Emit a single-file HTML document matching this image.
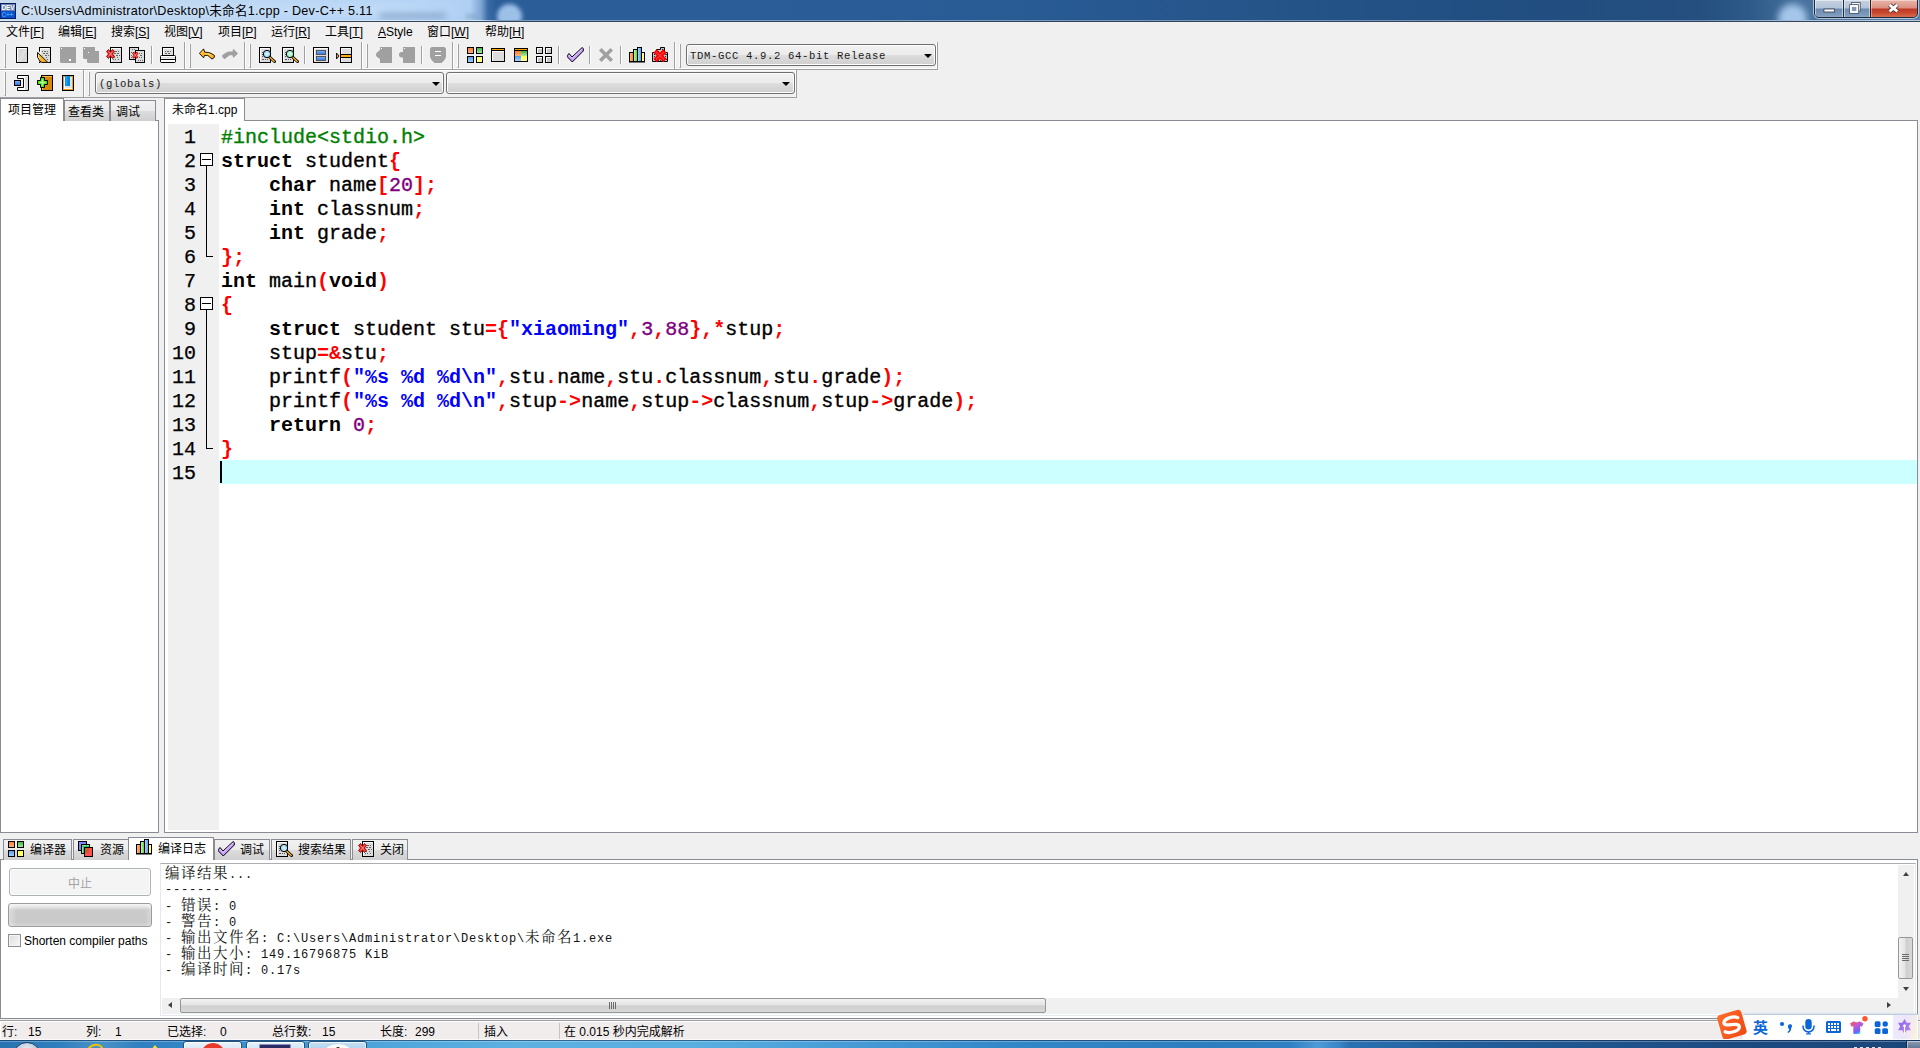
<!DOCTYPE html>
<html lang="zh-CN">
<head>
<meta charset="utf-8">
<title>Dev-C++ 5.11</title>
<style>
*{box-sizing:border-box;margin:0;padding:0}
html,body{width:1920px;height:1048px;overflow:hidden}
body{position:relative;background:#f0f0f0;font-family:"Liberation Sans","Noto Sans CJK SC",sans-serif;font-size:12px;color:#000;line-height:1}
.abs{position:absolute}
/* ---------- title bar ---------- */
#title{position:absolute;left:0;top:0;width:1920px;height:22px;overflow:hidden;background:linear-gradient(90deg,#c4d9ef 0px,#bdd6f1 150px,#b5d4f5 300px,#b3d3f6 420px,#b0d0f3 470px,#7ea6d4 481px,#3b6ba4 488px,#2b5e99 496px,#2b5e99 700px,#295b95 1000px,#245387 1300px,#214d80 1560px,#244f7f 1700px,#2d5a88 1750px,#48729e 1800px,#5a80a8 1920px)}
#title .ttl{position:absolute;left:21px;top:4px;font-size:12.6px;white-space:nowrap;letter-spacing:.27px;color:#000;line-height:15px}
#title .ln1{position:absolute;left:0;top:20px;width:1920px;height:1px;background:linear-gradient(90deg,#dbe8f6 0,#d0e2f5 480px,#7c9cc0 500px,#6d8fb5 1700px,#a9c2dc 1800px,#b8cde4 1920px)}
#title .ln2{position:absolute;left:0;top:21px;width:1920px;height:1px;background:#35455c}
/* ---------- menu ---------- */
#menu{position:absolute;left:0;top:22px;width:1920px;height:20px;background:#f0f0f0}
#menu span{position:absolute;top:3px;font-size:12px;line-height:14px;white-space:nowrap}
#menu u{text-decoration:underline;text-underline-offset:1px}
/* ---------- toolbars ---------- */
.tb{position:absolute;background:#f0f0f0}
.grip{position:absolute;width:2px;border-left:1px solid #fafafa;border-right:1px solid #a0a0a0;border-bottom:1px solid #a0a0a0}
.vsep{position:absolute;width:2px;border-left:1px solid #a0a0a0;border-right:1px solid #fff}
.bandend{position:absolute;width:2px;border-left:1px solid #a0a0a0;border-right:1px solid #fff}
.ico{position:absolute;width:16px;height:16px}
.combo{position:absolute;border:1px solid #707070;border-radius:3px;background:linear-gradient(#f2f2f2 0%,#ebebeb 48%,#dddddd 52%,#cfcfcf 100%);box-shadow:inset 0 0 0 1px #fcfcfc;font-family:"Liberation Mono",monospace;font-size:10px;white-space:nowrap}
.combo i{position:absolute;right:5px;top:8px;width:0;height:0;border-left:4px solid transparent;border-right:4px solid transparent;border-top:4px solid #000}
</style>
</head>
<body>
<!-- TITLE BAR -->
<div id="title">
 <div class="abs" style="left:0;top:0;width:470px;height:22px;background:linear-gradient(180deg,rgba(255,255,255,.05) 0,rgba(255,255,255,.18) 9px,rgba(255,255,255,.10) 16px,rgba(255,255,255,0) 21px);-webkit-mask-image:linear-gradient(90deg,#000 0,#000 380px,transparent 470px)"></div>
 <div class="abs" style="left:380px;top:13px;width:66px;height:6px;background:#7f9cc0;filter:blur(3px);opacity:.7"></div>
 <div class="abs" style="left:466px;top:14px;width:12px;height:5px;background:#7f9cc0;filter:blur(2px);opacity:.6"></div>
 <div class="abs" style="left:497px;top:4px;width:25px;height:25px;border-radius:50%;background:#9dc0e8;filter:blur(2px)"></div>
 <div class="abs" style="left:1778px;top:4px;width:29px;height:29px;border-radius:50%;background:#a4c6ea;filter:blur(3.500px)"></div>
 <!-- app icon -->
 <div class="abs" style="left:0;top:3px;width:16px;height:16px;background:#0d1c5c;overflow:hidden">
  <div class="abs" style="left:1px;top:1px;width:14px;height:7px;background:#6d83b3"></div>
  <div class="abs" style="left:1px;top:8px;width:14px;height:7px;background:#0a50c8"></div>
  <div class="abs" style="left:1.5px;top:1px;font:bold 6.5px/7px 'Liberation Sans',sans-serif;color:#fff;letter-spacing:-.2px">DEV</div>
  <div class="abs" style="left:1.5px;top:8px;font:bold 6.5px/7px 'Liberation Sans',sans-serif;color:#3f9cff;letter-spacing:-.2px">C++</div>
 </div>
 <div class="ttl">C:\Users\Administrator\Desktop\未命名1.cpp - Dev-C++ 5.11</div>
 <div class="ln1"></div><div class="ln2"></div>
 <!-- window controls -->
 <div class="abs" style="left:1814px;top:-1px;width:104px;height:19px;border:1px solid #1b2a3f;border-radius:0 0 5px 5px;overflow:hidden;box-shadow:0 0 0 1px rgba(255,255,255,.55)">
  <div class="abs" style="left:0;top:0;width:28px;height:18px;background:linear-gradient(#c3d0e0 0,#b4c4d8 8px,#6c8bb0 9px,#7f9bbc 15px,#93abc8 18px);box-shadow:inset 0 0 0 1px rgba(255,255,255,.5)"></div>
  <div class="abs" style="left:28px;top:0;width:1px;height:18px;background:#1b2a3f"></div>
  <div class="abs" style="left:29px;top:0;width:26px;height:18px;background:linear-gradient(#c3d0e0 0,#b4c4d8 8px,#6c8bb0 9px,#7f9bbc 15px,#93abc8 18px);box-shadow:inset 0 0 0 1px rgba(255,255,255,.5)"></div>
  <div class="abs" style="left:55px;top:0;width:1px;height:18px;background:#3a1410"></div>
  <div class="abs" style="left:56px;top:0;width:47px;height:18px;background:linear-gradient(#eab5ab 0,#dc9082 8px,#bd3a26 9px,#c9492f 13px,#d9765a 18px);box-shadow:inset 0 0 0 1px rgba(255,255,255,.4)"></div>
  <svg class="abs" style="left:0;top:0" width="104" height="18" viewBox="0 0 104 18">
   <rect x="8.900" y="9" width="10.500" height="3" fill="#fff" stroke="#3b4658" stroke-width=".9"/>
   <rect x="37.600" y="3.800" width="6.400" height="6" fill="none" stroke="#3b4658" stroke-width="3.200"/><rect x="37.600" y="3.800" width="6.400" height="6" fill="none" stroke="#f4f6f8" stroke-width="1.700"/>
   <rect x="35.900" y="6" width="6.400" height="6" fill="none" stroke="#3b4658" stroke-width="3.300"/><rect x="35.900" y="6" width="6.400" height="6" fill="#7e98b8" stroke="#fff" stroke-width="1.900"/>
   <path d="M74.600 4.900L82.300 11.300M82.300 4.900L74.600 11.300" stroke="#4a2a28" stroke-width="4.400"/><path d="M74.600 4.900L82.300 11.300M82.300 4.900L74.600 11.300" stroke="#fff" stroke-width="2.800"/>
  </svg>
 </div>
</div>
<!-- MENU -->
<div id="menu">
 <span style="left:6px">文件[<u>F</u>]</span>
 <span style="left:58px">编辑[<u>E</u>]</span>
 <span style="left:111px">搜索[<u>S</u>]</span>
 <span style="left:164px">视图[<u>V</u>]</span>
 <span style="left:218px">项目[<u>P</u>]</span>
 <span style="left:271px">运行[<u>R</u>]</span>
 <span style="left:325px">工具[<u>T</u>]</span>
 <span style="left:378px"><u>A</u>Style</span>
 <span style="left:427px">窗口[<u>W</u>]</span>
 <span style="left:485px">帮助[<u>H</u>]</span>
</div>
<!--TOOLBARS-->
<svg width="0" height="0" style="position:absolute">
<defs>
<linearGradient id="gO" x1="0" y1="0" x2="0" y2="1"><stop offset="0" stop-color="#ff7a33"/><stop offset="1" stop-color="#ffb27a"/></linearGradient>
<linearGradient id="gG" x1="0" y1="0" x2="0" y2="1"><stop offset="0" stop-color="#3fae3f"/><stop offset="1" stop-color="#a8f0a0"/></linearGradient>
<linearGradient id="gB" x1="0" y1="0" x2="0" y2="1"><stop offset="0" stop-color="#4f9cf0"/><stop offset="1" stop-color="#a4d2ff"/></linearGradient>
<linearGradient id="gY" x1="0" y1="0" x2="0" y2="1"><stop offset="0" stop-color="#ffff40"/><stop offset="1" stop-color="#ffffa0"/></linearGradient>
<linearGradient id="gP" x1="0" y1="0" x2="1" y2="1"><stop offset="0" stop-color="#e8e8e8"/><stop offset="1" stop-color="#cfcfcf"/></linearGradient>
<radialGradient id="gMb"><stop offset="0" stop-color="#e4f6ff"/><stop offset="1" stop-color="#8fd0ee"/></radialGradient>
<radialGradient id="gMg"><stop offset="0" stop-color="#e0fff0"/><stop offset="1" stop-color="#86e8b8"/></radialGradient>
<linearGradient id="hO" x1="0" y1="0" x2="1" y2="0"><stop offset="0" stop-color="#ffc08a"/><stop offset="1" stop-color="#ff7a28"/></linearGradient><linearGradient id="hG" x1="0" y1="0" x2="1" y2="0"><stop offset="0" stop-color="#c8ffb0"/><stop offset="1" stop-color="#58c838"/></linearGradient><linearGradient id="hB" x1="0" y1="0" x2="1" y2="0"><stop offset="0" stop-color="#b8deff"/><stop offset="1" stop-color="#4a98f0"/></linearGradient><linearGradient id="hY" x1="0" y1="0" x2="1" y2="0"><stop offset="0" stop-color="#ffffc0"/><stop offset="1" stop-color="#ffff30"/></linearGradient><linearGradient id="gBar" x1="0" y1="0" x2="0" y2="1"><stop offset="0" stop-color="#7fb4ff"/><stop offset="1" stop-color="#2f6fe0"/></linearGradient>

<symbol id="i-new" viewBox="0 0 16 16"><rect x="2" y="0" width="12" height="16" fill="#000"/><rect x="3" y="1" width="10" height="14" fill="#d8d8d8"/><rect x="3" y="1" width="10" height="1" fill="#fff"/><rect x="3" y="1" width="1" height="14" fill="#fff"/><path d="M6 14L11 3" stroke="#e2e2e2" stroke-width="2"/></symbol>

<symbol id="i-page" viewBox="0 0 12 16"><rect x=".5" y=".5" width="11" height="15" fill="#dcdcdc" stroke="#000"/><path d="M1.5 14.5V1.5H10.5" stroke="#fff" fill="none"/><path d="M3 4.5h1m1 0h2m1 0h1M4 6.5h2m1 0h2M3 8.5h1m2 0h2m1 0h1M4 10.5h1m2 0h1M3 12.5h1m1 0h1m2 0h1" stroke="#666" fill="none"/></symbol>

<symbol id="i-open" viewBox="0 0 16 16"><use href="#i-page" x="2" y="0" width="12" height="16"/><path d="M0 4.500V11L2 14 4 16H11.500L2.500 4.500Z" fill="#f0f0f0"/><path d="M.6 5.500V10L2.200 13 4.500 15.400H10.800Z" fill="#ffb320" stroke="#000" stroke-linejoin="round"/><path d="M1.500 7.500V10L3 12.500" stroke="#ffe29a" fill="none"/></symbol>

<symbol id="i-save" viewBox="0 0 16 16"><path d="M0 0H16V16H1L0 15Z" fill="#a0a0a0"/><rect x="1" y="1" width="1" height="1" fill="#fff"/><rect x="9" y="12" width="2" height="2" fill="#fff"/></symbol>

<symbol id="i-saveall" viewBox="0 0 16 16"><path d="M0 0H12V4H16V16H5L4 15V12H1L0 11Z" fill="#a0a0a0"/><rect x="1" y="1" width="1" height="1" fill="#fff"/><rect x="5" y="5" width="1" height="1" fill="#fff"/></symbol>

<symbol id="i-redx" viewBox="0 0 9 11"><path d="M.5 2.500L2.500 .5 4.500 2.800 6.500 .5 8.500 2.500 6.500 5 8.500 7.500 6.500 9.500 4.500 7.200 2.500 9.500 .5 7.500 2.500 5Z" fill="#ff2020" stroke="#700" stroke-width=".8"/><path d="M2.500 2.500L6.500 7.500M6.500 2.500L2.500 7.500" stroke="#ff9090" stroke-width="1"/></symbol>

<symbol id="i-close" viewBox="0 0 16 16"><use href="#i-page" x="4" y="0" width="12" height="16"/><use href="#i-redx" x="0" y="2" width="9" height="11"/></symbol>

<symbol id="i-closeall" viewBox="0 0 16 16"><rect x=".5" y=".5" width="9" height="12" fill="#dcdcdc" stroke="#000"/><path d="M3 2.5h1m1 0h1M2 5.5h1M2 8.5h1M2 10.5h1" stroke="#666"/><rect x="6.5" y="3.5" width="9" height="12" fill="#dcdcdc" stroke="#000"/><path d="M10 6.5h1m1 0h1M11 8.5h2M10 10.5h1m1 0h1M9 13.5h1m1 0h1m1 0h1" stroke="#666"/><use href="#i-redx" x="3" y="4.5" width="6.5" height="8"/></symbol>

<symbol id="i-print" viewBox="0 0 16 16"><rect x="2.5" y=".5" width="11" height="8" fill="#dcdcdc" stroke="#000"/><path d="M3.5 8V1.5H12.5" stroke="#fff" fill="none"/><path d="M5 4.5h1m1 0h2m1 0h1M5 6.5h2m1 0h2" stroke="#666"/><rect x=".5" y="8.5" width="15" height="7" rx="1" fill="#fff" stroke="#000"/><rect x="1.5" y="10" width="13" height="1.5" fill="#d8d8d8"/><path d="M.5 12.5H15.5" stroke="#000"/></symbol>

<symbol id="i-undo" viewBox="0 0 16 16"><path d="M.4 6.400L4.600 1.900 5.800 5.200 9.750 5.500 12.500 6.600 15.600 8.500 15.200 10.600 13 12 10.700 10.100 8.800 8.400H5.500L4.600 10.800Z" fill="#ffb320" stroke="#000" stroke-width=".9" stroke-linejoin="round"/><path d="M2 6.400L4 4.200M6 6.800H9L12 8.200" stroke="#ffe08a" fill="none"/></symbol>

<symbol id="i-redo" viewBox="0 0 16 16"><path d="M16 6.400L11.400 1.800 10.400 4.500H6.400L3 6.300 0 8.500 .6 10.600 2.700 12.200 5 10.200 7.800 8.200H10.400L11.400 11Z" fill="#a0a0a0"/></symbol>

<symbol id="i-find" viewBox="0 0 17 16"><rect x=".5" y=".5" width="11" height="15" fill="#dcdcdc" stroke="#000"/><path d="M1.500 14.500V1.500H10.500" stroke="#fff" fill="none"/><path d="M3 5.500h1M3 7.500h1M3 9.500h1M3 12.500h2m1 0h1m1 0h1" stroke="#555"/><path d="M10.500 10L15.500 14.500" stroke="#000" stroke-width="3" stroke-linecap="round"/><path d="M11 10.500L15.300 14.400" stroke="#ffb320" stroke-width="1.400" stroke-linecap="round"/><circle cx="8" cy="7" r="3.700" fill="url(#gMb)" stroke="#000"/></symbol>

<symbol id="i-repl" viewBox="0 0 17 16"><rect x=".5" y=".5" width="11" height="15" fill="#dcdcdc" stroke="#000"/><path d="M1.500 14.500V1.500H10.500" stroke="#fff" fill="none"/><path d="M3 5.500h1M3 7.500h1M3 9.500h1M3 12.500h2m1 0h1m1 0h1" stroke="#555"/><path d="M10.500 10L15.500 14.500" stroke="#000" stroke-width="3" stroke-linecap="round"/><path d="M11 10.500L15.300 14.400" stroke="#ffb320" stroke-width="1.400" stroke-linecap="round"/><circle cx="8" cy="7" r="3.700" fill="url(#gMg)" stroke="#000"/></symbol>

<symbol id="i-list" viewBox="0 0 16 16"><rect x=".5" y=".5" width="15" height="15" fill="#dcdcdc" stroke="#000"/><path d="M1.500 14.500V1.500H14.500" stroke="#fff" fill="none"/><rect x="3.500" y="3.500" width="9" height="4" fill="url(#gBar)" stroke="#555"/><rect x="3.500" y="9.500" width="9" height="4" fill="url(#gBar)" stroke="#555"/></symbol>

<symbol id="i-goto" viewBox="0 0 16 16"><rect x="4.500" y=".5" width="11" height="15" fill="#dcdcdc" stroke="#000"/><path d="M5.500 14.500V1.500H14.500" stroke="#fff" fill="none"/><rect x="4.500" y="7.500" width="11" height="3" fill="#ffa810" stroke="#000"/><path d="M.5 6L3 9 .5 12Z" fill="#ffa810" stroke="#000" stroke-width=".9" stroke-linejoin="round"/></symbol>

<symbol id="i-tag1" viewBox="0 0 16 16"><path d="M4 0H16V16H4V12L1 10 0 8.500V7L1 5.500 4 3Z" fill="#a0a0a0"/><rect x="5" y="1" width="1" height="1" fill="#fff"/></symbol>
<symbol id="i-tag2" viewBox="0 0 16 16"><path d="M4 0H16V16H4V10.500H2L.5 9.500 0 8V7L.5 6 2 5H4Z" fill="#a0a0a0"/><rect x="5" y="1" width="1" height="1" fill="#fff"/></symbol>
<symbol id="i-shield" viewBox="0 0 16 16"><path d="M0 1.500L1.500 0H14.500L16 1.500V10L14.500 13 11.500 16H4.500L1.500 13 0 10Z" fill="#a0a0a0"/><rect x="5" y="4" width="6" height="1" fill="#fff"/><rect x="5" y="8" width="6" height="1" fill="#fff"/></symbol>

<symbol id="i-comp" viewBox="0 0 16 16"><rect x=".5" y=".5" width="6" height="6" fill="url(#gO)" stroke="#000"/><rect x="9.500" y=".5" width="6" height="6" fill="url(#gG)" stroke="#000"/><rect x=".5" y="9.500" width="6" height="6" fill="url(#gB)" stroke="#000"/><rect x="9.500" y="9.500" width="6" height="6" fill="url(#gY)" stroke="#000"/></symbol>

<symbol id="i-run" viewBox="0 0 16 16"><rect x="1.500" y="1.500" width="13" height="13" fill="#dcdcdc" stroke="#000"/><rect x="2" y="2" width="12" height="1" fill="#ffa500"/><rect x="2" y="3" width="12" height="1" fill="#000"/><path d="M2.500 14V4.500H14" stroke="#fff" fill="none"/></symbol>

<symbol id="i-crun" viewBox="0 0 16 16"><rect x="1.500" y="1.500" width="13" height="13" fill="#dcdcdc" stroke="#000"/><rect x="2" y="2" width="12" height="1" fill="#ffa500"/><rect x="2" y="3" width="12" height="1" fill="#000"/><rect x="2" y="4" width="6" height="5" fill="url(#gO)"/><rect x="8" y="4" width="6" height="5" fill="url(#gG)"/><rect x="2" y="9" width="6" height="5" fill="url(#gB)"/><rect x="8" y="9" width="6" height="5" fill="url(#gY)"/></symbol>

<symbol id="i-reb" viewBox="0 0 16 16"><g fill="#c8c8c8" stroke="#000"><rect x=".5" y=".5" width="6" height="6"/><rect x="9.500" y=".5" width="6" height="6"/><rect x=".5" y="9.500" width="6" height="6"/><rect x="9.500" y="9.500" width="6" height="6"/></g><path d="M1.500 6V1.500H6M10.500 6V1.500H15M1.500 15V10.500H6M10.500 15V10.500H15" stroke="#fff" fill="none"/></symbol>

<symbol id="i-check" viewBox="0 0 17 16"><path d="M.3 8.700L2 6.500 5 10 15.200 .5 16.300 1.500V4L5.300 15 .3 9.800Z" fill="#c79cff" stroke="#000" stroke-linejoin="round"/><path d="M2 8L5 11.500 15 2" stroke="#e6d0ff" fill="none"/></symbol>

<symbol id="i-x" viewBox="0 0 16 16"><path d="M1 3.500L3.500 1 8 5.500 12.500 1 15 3.500 10.500 8 15 12.500 12.500 15 8 10.500 3.500 15 1 12.500 5.500 8Z" fill="#a0a0a0"/></symbol>

<symbol id="i-chart" viewBox="0 0 16 16"><rect x=".5" y="5.500" width="4" height="9" fill="url(#hO)" stroke="#000"/><rect x="4.500" y="2.500" width="4" height="12" fill="url(#hG)" stroke="#000"/><rect x="8.500" y=".5" width="4" height="14" fill="url(#hB)" stroke="#000"/><rect x="12.500" y="5.500" width="3" height="9" fill="url(#hY)" stroke="#000"/><path d="M0 15H16" stroke="#000"/></symbol>

<symbol id="i-delp" viewBox="0 0 16 16"><path d="M.5 14.500V5.500H4.500V2.500H8.500V.5H12.500V5.500H15.500V14.500Z" fill="#c4c4c4" stroke="#000"/><path d="M2 7.500h1m1 0h1M2 9.500h1M2 12.500h1m1 0h1m7 0h1m1 0h1M13 7.500h2M13 9.500h1M6 13.500h1m1 0h1m1 0h1M6 4.500h1M10 2.500h1" stroke="#333"/><path d="M3 4L13 13.500M13 4L3 13.500" stroke="#f80000" stroke-width="4.600"/><path d="M4 5L12 12.500M12 5L4 12.500" stroke="#ff3a3a" stroke-width="1.200"/></symbol>

<symbol id="i-t2a" viewBox="0 0 16 16"><path d="M3.500 .5H14.500V15.500H3.500V12.500H9.500V3.500H3.500Z" fill="#fff" stroke="#000"/><path d="M11 1.500H14V15H11Z" fill="#dcdcdc"/><rect x=".5" y="5.500" width="6" height="5" fill="url(#gBar)" stroke="#000"/></symbol>

<symbol id="i-t2b" viewBox="0 0 16 16"><rect x="4.500" y=".5" width="11" height="15" fill="#d48806" stroke="#000"/><path d="M5.500 15V1.500H15" stroke="#ffb840" fill="none"/><path d="M3.500 2.500H7.500V5.500H10.500V9.500H7.500V12.500H3.500V9.500H.5V5.500H3.500Z" fill="#48e018" stroke="#000" stroke-linejoin="round"/><path d="M5.500 4.500V10.500M2.500 7.500H8.500" stroke="#b4ff98" stroke-width="1.400" fill="none"/></symbol>

<symbol id="i-t2c" viewBox="0 0 16 16"><rect x="2.500" y=".5" width="11" height="15" fill="#f0a010" stroke="#000"/><rect x="4" y="2" width="8" height="12" fill="#e2e2e2"/><path d="M4.500 13V2" stroke="#fff"/><path d="M4 13.500H12" stroke="#f6f6f6"/><rect x="5" y="1" width="5" height="10" fill="#0088dd"/><path d="M6.500 1V10.500" stroke="#20a8f8" stroke-width="1.500"/></symbol>

<symbol id="i-res" viewBox="0 0 16 16"><rect x=".5" y=".5" width="8" height="9" fill="#8484ff" stroke="#000"/><rect x="3.500" y="3.500" width="8" height="9" fill="#38c860" stroke="#000"/><path d="M4.500 4.500H8M9 4.500H10.500M4.500 6V12" stroke="#7cf0a0" fill="none"/><rect x="6.500" y="6.500" width="8" height="9" fill="#ff5050" stroke="#000"/><rect x="7" y="7" width="4" height="5" fill="#d05828"/><rect x="7" y="7" width="2" height="2" fill="#c07018"/></symbol>
</defs>
</svg>

<!-- toolbar 1 band -->
<div class="abs" style="left:0;top:42px;width:938px;height:28px;border-right:1px solid #a0a0a0;border-bottom:1px solid #a0a0a0"></div>
<div class="abs" style="left:0;top:68px;width:937px;height:1px;background:#fff"></div>
<div class="abs" style="left:936px;top:42px;width:1px;height:27px;background:#fff"></div>
<!-- toolbar 2 band -->
<div class="abs" style="left:0;top:70px;width:797px;height:28px;border-right:1px solid #a0a0a0;border-bottom:1px solid #a0a0a0"></div>
<div class="abs" style="left:0;top:70px;width:796px;height:1px;background:#fff"></div>
<div class="abs" style="left:795px;top:70px;width:1px;height:27px;background:#fff"></div>

<!-- grips and separators row1 -->
<div class="grip" style="left:4px;top:44px;height:24px"></div>
<div class="bandend" style="left:184px;top:42px;height:27px"></div><div class="grip" style="left:189px;top:44px;height:24px"></div>
<div class="bandend" style="left:244px;top:42px;height:27px"></div><div class="grip" style="left:249px;top:44px;height:24px"></div>
<div class="bandend" style="left:361px;top:42px;height:27px"></div><div class="grip" style="left:366px;top:44px;height:24px"></div>
<div class="bandend" style="left:452px;top:42px;height:27px"></div><div class="grip" style="left:457px;top:44px;height:24px"></div>
<div class="bandend" style="left:674px;top:42px;height:27px"></div><div class="grip" style="left:679px;top:44px;height:24px"></div>
<div class="vsep" style="left:151px;top:46px;height:18px"></div>
<div class="vsep" style="left:304px;top:46px;height:18px"></div>
<div class="vsep" style="left:421px;top:46px;height:18px"></div>
<div class="vsep" style="left:558px;top:46px;height:18px"></div>
<div class="vsep" style="left:589px;top:46px;height:18px"></div>
<div class="vsep" style="left:620px;top:46px;height:18px"></div>
<!-- row2 -->
<div class="grip" style="left:4px;top:72px;height:24px"></div>
<div class="bandend" style="left:83px;top:70px;height:27px"></div><div class="grip" style="left:88px;top:72px;height:24px"></div>

<!-- icons row1 (y=47) -->
<svg class="ico" style="left:14px;top:47px"><use href="#i-new"/></svg>
<svg class="ico" style="left:37px;top:47px"><use href="#i-open"/></svg>
<svg class="ico" style="left:60px;top:47px"><use href="#i-save"/></svg>
<svg class="ico" style="left:83px;top:47px"><use href="#i-saveall"/></svg>
<svg class="ico" style="left:106px;top:47px"><use href="#i-close"/></svg>
<svg class="ico" style="left:129px;top:47px"><use href="#i-closeall"/></svg>
<svg class="ico" style="left:160px;top:47px"><use href="#i-print"/></svg>
<svg class="ico" style="left:199px;top:47px"><use href="#i-undo"/></svg>
<svg class="ico" style="left:222px;top:47px"><use href="#i-redo"/></svg>
<svg class="ico" style="left:259px;top:47px;width:17px"><use href="#i-find"/></svg>
<svg class="ico" style="left:282px;top:47px;width:17px"><use href="#i-repl"/></svg>
<svg class="ico" style="left:313px;top:47px"><use href="#i-list"/></svg>
<svg class="ico" style="left:336px;top:47px"><use href="#i-goto"/></svg>
<svg class="ico" style="left:376px;top:47px"><use href="#i-tag1"/></svg>
<svg class="ico" style="left:399px;top:47px"><use href="#i-tag2"/></svg>
<svg class="ico" style="left:430px;top:47px"><use href="#i-shield"/></svg>
<svg class="ico" style="left:467px;top:47px"><use href="#i-comp"/></svg>
<svg class="ico" style="left:490px;top:47px"><use href="#i-run"/></svg>
<svg class="ico" style="left:513px;top:47px"><use href="#i-crun"/></svg>
<svg class="ico" style="left:536px;top:47px"><use href="#i-reb"/></svg>
<svg class="ico" style="left:567px;top:47px;width:17px"><use href="#i-check"/></svg>
<svg class="ico" style="left:598px;top:47px"><use href="#i-x"/></svg>
<svg class="ico" style="left:629px;top:47px"><use href="#i-chart"/></svg>
<svg class="ico" style="left:652px;top:47px"><use href="#i-delp"/></svg>
<!-- icons row2 (y=75) -->
<svg class="ico" style="left:14px;top:75px"><use href="#i-t2a"/></svg>
<svg class="ico" style="left:37px;top:75px"><use href="#i-t2b"/></svg>
<svg class="ico" style="left:60px;top:75px"><use href="#i-t2c"/></svg>

<!-- combos -->
<div class="combo" style="left:686px;top:44px;width:250px;height:22px"><span style="position:absolute;left:3px;top:5px;font-size:10.6px;letter-spacing:.64px;line-height:12px;color:#1a1a1a">TDM-GCC 4.9.2 64-bit Release</span><i style="top:9px;right:3px"></i></div>
<div class="combo" style="left:95px;top:72px;width:349px;height:22px"><span style="position:absolute;left:3px;top:5px;font-size:10.6px;letter-spacing:.64px;line-height:12px;color:#1a1a1a">(globals)</span><i style="top:9px;right:3px"></i></div>
<div class="combo" style="left:446px;top:72px;width:349px;height:22px"><i style="top:9px;right:4px"></i></div>
<!--/TOOLBARS-->
<!--LEFTPANEL-->
<style>
.tabi{position:absolute;border:1px solid #898c95;border-bottom:none;background:linear-gradient(#f2f2f2 0%,#ebebeb 50%,#dddddd 50%,#cfcfcf 100%);white-space:nowrap}
.taba{position:absolute;border:1px solid #898c95;border-bottom:none;background:#fff;white-space:nowrap}
.t12{position:absolute;font-size:12px;line-height:14px;white-space:nowrap}
#code{position:absolute;left:221px;top:126px;-webkit-text-stroke:.35px;font-family:"Liberation Mono",monospace;font-size:20px;line-height:24px;white-space:pre;color:#000}
#code div{height:24px}
#code b{font-weight:bold;-webkit-text-stroke:0}
#code .r{color:#ff0000;font-weight:bold;-webkit-text-stroke:0}
#code .g{color:#008000}
#code .p{color:#800080}
#code .s{color:#0000ff;font-weight:bold;-webkit-text-stroke:0}
#ln{position:absolute;left:168px;top:126px;-webkit-text-stroke:.25px;width:28px;font-family:"Liberation Mono",monospace;font-size:20px;line-height:24px;text-align:right;color:#000}
#ln div{height:24px}
.fold{position:absolute;left:200px;width:13px;height:13px;border:1px solid #000;background:#fff}
.fold:after{content:"";position:absolute;left:1px;top:5px;width:9px;height:1px;background:#000}
#log{position:absolute;left:165px;top:866px;font-family:"Liberation Mono","Noto Sans CJK SC",monospace;font-size:12px;letter-spacing:.8px;line-height:16px;white-space:pre;color:#111}
#log div{height:16px}
#log .c{font-family:"Liberation Mono","Noto Serif CJK SC",serif;font-size:14.5px;letter-spacing:1.5px}
#status span{position:absolute;top:4px;font-size:12px;line-height:14px;white-space:nowrap}
</style>
<!-- LEFT PANEL -->
<div class="abs" style="left:0;top:120px;width:159px;height:713px;border:1px solid #898c95;background:#fff"></div>
<div class="tabi" style="left:64px;top:100px;width:46px;height:21px"><span class="t12" style="left:3px;top:4px">查看类</span></div>
<div class="tabi" style="left:110px;top:100px;width:46px;height:21px"><span class="t12" style="left:5px;top:4px">调试</span></div>
<div class="taba" style="left:0;top:98px;width:64px;height:23px"><span class="t12" style="left:7px;top:4px">项目管理</span></div>
<!-- EDITOR PANEL -->
<div class="abs" style="left:164px;top:120px;width:1754px;height:713px;border:1px solid #898c95;background:#fff"></div>
<div class="taba" style="left:164px;top:98px;width:81px;height:23px"><span class="t12" style="left:7px;top:4px">未命名1.cpp</span></div>
<div class="abs" style="left:168px;top:124px;width:51px;height:706px;background:#f0f0f0"></div>
<div class="abs" style="left:219px;top:460px;width:1698px;height:24px;background:#ccffff"></div>
<div class="abs" style="left:220px;top:461px;width:2px;height:22px;background:#000"></div>
<div id="ln"><div>1</div><div>2</div><div>3</div><div>4</div><div>5</div><div>6</div><div>7</div><div>8</div><div>9</div><div>10</div><div>11</div><div>12</div><div>13</div><div>14</div><div>15</div></div>
<div class="fold" style="top:153px"></div>
<div class="abs" style="left:206px;top:166px;width:1px;height:91px;background:#000"></div>
<div class="abs" style="left:206px;top:256px;width:7px;height:1px;background:#000"></div>
<div class="fold" style="top:297px"></div>
<div class="abs" style="left:206px;top:310px;width:1px;height:139px;background:#000"></div>
<div class="abs" style="left:206px;top:448px;width:7px;height:1px;background:#000"></div>
<div id="code"><div><span class="g">#include&lt;stdio.h&gt;</span></div><div><b>struct</b> student<span class="r">{</span></div><div>    <b>char</b> name<span class="r">[</span><span class="p">20</span><span class="r">];</span></div><div>    <b>int</b> classnum<span class="r">;</span></div><div>    <b>int</b> grade<span class="r">;</span></div><div><span class="r">};</span></div><div><b>int</b> main<span class="r">(</span><b>void</b><span class="r">)</span></div><div><span class="r">{</span></div><div>    <b>struct</b> student stu<span class="r">={</span><span class="s">"xiaoming"</span><span class="r">,</span><span class="p">3</span><span class="r">,</span><span class="p">88</span><span class="r">},*</span>stup<span class="r">;</span></div><div>    stup<span class="r">=&amp;</span>stu<span class="r">;</span></div><div>    printf<span class="r">(</span><span class="s">"%s %d %d\n"</span><span class="r">,</span>stu<span class="r">.</span>name<span class="r">,</span>stu<span class="r">.</span>classnum<span class="r">,</span>stu<span class="r">.</span>grade<span class="r">);</span></div><div>    printf<span class="r">(</span><span class="s">"%s %d %d\n"</span><span class="r">,</span>stup<span class="r">-&gt;</span>name<span class="r">,</span>stup<span class="r">-&gt;</span>classnum<span class="r">,</span>stup<span class="r">-&gt;</span>grade<span class="r">);</span></div><div>    <b>return</b> <span class="p">0</span><span class="r">;</span></div><div><span class="r">}</span></div><div></div></div>

<!-- BOTTOM PANEL -->
<div class="abs" style="left:0;top:859px;width:1918px;height:160px;border:1px solid #898c95;background:#fff"></div>
<div class="tabi" style="left:3px;top:839px;width:69px;height:21px"><svg class="ico" style="left:4px;top:1px"><use href="#i-comp"/></svg><span class="t12" style="left:26px;top:3px">编译器</span></div>
<div class="tabi" style="left:73px;top:839px;width:56px;height:21px"><svg class="ico" style="left:4px;top:1px"><use href="#i-res"/></svg><span class="t12" style="left:26px;top:3px">资源</span></div>
<div class="tabi" style="left:214px;top:839px;width:56px;height:21px"><svg class="ico" style="left:3px;top:1px;width:17px"><use href="#i-check"/></svg><span class="t12" style="left:25px;top:3px">调试</span></div>
<div class="tabi" style="left:271px;top:839px;width:80px;height:21px"><svg class="ico" style="left:4px;top:1px;width:17px"><use href="#i-find"/></svg><span class="t12" style="left:26px;top:3px">搜索结果</span></div>
<div class="tabi" style="left:352px;top:839px;width:56px;height:21px"><svg class="ico" style="left:5px;top:1px"><use href="#i-close"/></svg><span class="t12" style="left:27px;top:3px">关闭</span></div>
<div class="taba" style="left:128px;top:837px;width:86px;height:23px"><svg class="ico" style="left:7px;top:1px"><use href="#i-chart"/></svg><span class="t12" style="left:29px;top:4px">编译日志</span></div>

<div class="abs" style="left:9px;top:868px;width:142px;height:28px;border:1px solid #adb2b5;border-radius:3px;background:#f4f4f4;box-shadow:inset 0 0 0 1px #fcfcfc"><span class="t12" style="left:58px;top:7.500px;color:#a3a3a3">中止</span></div>
<div class="abs" style="left:8px;top:903px;width:144px;height:24px;border:1px solid #9c9c9c;border-radius:3px;background:linear-gradient(90deg,rgba(255,255,255,.35) 0,rgba(255,255,255,0) 8px,rgba(255,255,255,0) 136px,rgba(255,255,255,.35) 144px),linear-gradient(#f6f6f6 0,#e4e4e4 3px,#cbcbcb 6px,#c9c9c9 18px,#d6d6d6 22px)"></div>
<div class="abs" style="left:8px;top:934px;width:13px;height:13px;border:1px solid #8e8f8f;background:linear-gradient(135deg,#dcdcdc,#fafafa);box-shadow:inset 0 0 0 1px #f4f4f4"></div>
<span class="t12" style="left:24px;top:934px">Shorten compiler paths</span>

<!-- log -->
<div class="abs" style="left:160px;top:863px;width:1756px;height:153px;border:1px solid #e3e9ef;border-top-color:#abadb3;background:#fff"></div>
<div id="log"><div><span class="c">编译结果</span>...</div><div>--------</div><div>- <span class="c">错误</span>: 0</div><div>- <span class="c">警告</span>: 0</div><div>- <span class="c">输出文件名</span>: C:\Users\Administrator\Desktop\<span class="c">未命名</span>1.exe</div><div>- <span class="c">输出大小</span>: 149.16796875 KiB</div><div>- <span class="c">编译时间</span>: 0.17s</div></div>
<!-- log scrollbars -->
<div class="abs" style="left:1898px;top:865px;width:16px;height:133px;background:#f0f0f0"></div>
<div class="abs" style="left:162px;top:998px;width:1752px;height:16px;background:#f0f0f0"></div>
<div class="abs" style="left:1898px;top:937px;width:15px;height:42px;border:1px solid #979797;border-radius:2px;background:linear-gradient(90deg,#f2f2f2,#e4e4e4 45%,#cfcfcf 55%,#d8d8d8)"></div>
<div class="abs" style="left:1902px;top:954px;width:7px;height:1px;background:#6c6c6c;box-shadow:0 2px 0 #6c6c6c,0 4px 0 #6c6c6c,0 6px 0 #6c6c6c"></div>
<div class="abs" style="left:1903px;top:872px;width:0;height:0;border-left:3.500px solid transparent;border-right:3.500px solid transparent;border-bottom:4px solid #404040"></div>
<div class="abs" style="left:1903px;top:987px;width:0;height:0;border-left:3.500px solid transparent;border-right:3.500px solid transparent;border-top:4px solid #404040"></div>
<div class="abs" style="left:180px;top:998px;width:866px;height:15px;border:1px solid #979797;border-radius:2px;background:linear-gradient(#f2f2f2,#e4e4e4 45%,#cfcfcf 55%,#d8d8d8)"></div>
<div class="abs" style="left:609px;top:1002px;width:1px;height:7px;background:#6c6c6c;box-shadow:2px 0 0 #6c6c6c,4px 0 0 #6c6c6c,6px 0 0 #6c6c6c"></div>
<div class="abs" style="left:168px;top:1002px;width:0;height:0;border-top:3.500px solid transparent;border-bottom:3.500px solid transparent;border-right:4px solid #404040"></div>
<div class="abs" style="left:1887px;top:1002px;width:0;height:0;border-top:3.500px solid transparent;border-bottom:3.500px solid transparent;border-left:4px solid #404040"></div>

<!-- STATUS BAR -->
<div id="status" class="abs" style="left:0;top:1020px;width:1920px;height:20px;background:#f1eded;border-top:1px solid #a0a0a0;box-shadow:inset 0 1px 0 #fff,inset 1px 0 0 #fff">
<span style="left:2px">行:</span><span style="left:28px">15</span>
<span style="left:86px">列:</span><span style="left:115px">1</span>
<span style="left:167px">已选择:</span><span style="left:220px">0</span>
<span style="left:272px">总行数:</span><span style="left:322px">15</span>
<span style="left:380px">长度:</span><span style="left:415px">299</span>
<span style="left:484px">插入</span>
<span style="left:564px">在 0.015 秒内完成解析</span>
<div class="abs" style="left:478px;top:2px;width:1px;height:16px;background:#c8c4c4"></div>
<div class="abs" style="left:559px;top:2px;width:1px;height:16px;background:#c8c4c4"></div>
</div>
<!-- SOGOU IME BAR -->
<div class="abs" style="left:1742px;top:1014px;width:176px;height:26px;background:#fff;border-top:1px solid #b9cfe6;border-radius:3px 0 0 3px;box-shadow:0 0 2px rgba(120,150,190,.5)"></div>
<div class="abs" style="left:1893px;top:1015px;width:24px;height:25px;background:linear-gradient(100deg,#efeafd 0,#ece6fb 55%,#fdf3d8 100%)"></div>
<svg class="abs" style="left:1712px;top:1006px" width="40" height="38" viewBox="0 0 40 38">
 <defs><linearGradient id="sgO" x1="0" y1="0" x2="1" y2="1"><stop offset="0" stop-color="#ff6a2a"/><stop offset="1" stop-color="#ee4a12"/></linearGradient></defs>
 <g transform="rotate(-16 20 19)"><rect x="7.500" y="6" width="25" height="25.500" rx="3.500" fill="url(#sgO)"/>
 <path d="M27.500 13.500C24 10.200 14 10.600 12.800 14.800C11.800 19.400 27 17.400 26.600 22.400C26 26.800 15.500 27 11.600 23.600" fill="none" stroke="#fff" stroke-width="3.300" stroke-linecap="round"/></g>
</svg>
<div class="abs" style="left:1753px;top:1018px;font:bold 15px/18px 'Noto Sans CJK SC','Liberation Sans',sans-serif;color:#0a66d8">英</div>
<svg class="abs" style="left:1776px;top:1016px" width="142" height="22" viewBox="0 0 142 22">
 <g fill="#0a66d8">
 <circle cx="6" cy="8" r="2.100"/><path d="M12 10.200a2 2 0 1 1 3.300 1.500c0 2.400-1.200 4.300-3.300 5.300l-.5-.9c1.200-.8 1.800-1.800 1.800-3-.8-.3-1.300-1-1.300-2.900z"/>
 <rect x="29.300" y="3" width="6.400" height="10.400" rx="3.200"/><path d="M27 9.500v1a5.500 5.500 0 0 0 11 0v-1" fill="none" stroke="#0a66d8" stroke-width="1.500"/><rect x="31.800" y="15.500" width="1.500" height="2"/><rect x="30" y="17.300" width="5" height="1.300" rx=".6"/>
 <path d="M51.500 5h12a1.500 1.500 0 0 1 1.500 1.500v9a1.500 1.500 0 0 1-1.500 1.500h-12a1.500 1.500 0 0 1-1.500-1.500v-9a1.500 1.500 0 0 1 1.500-1.500z"/>
 </g>
 <g fill="#fff"><rect x="52" y="7" width="2" height="2"/><rect x="55" y="7" width="2" height="2"/><rect x="58" y="7" width="2" height="2"/><rect x="61" y="7" width="2" height="2"/><rect x="52" y="10" width="2" height="2"/><rect x="55" y="10" width="2" height="2"/><rect x="58" y="10" width="2" height="2"/><rect x="61" y="10" width="2" height="2"/><rect x="52" y="13" width="2" height="2"/><rect x="55" y="13" width="5" height="2"/><rect x="61" y="13" width="2" height="2"/></g>
 <defs><linearGradient id="sgT" x1="0" y1="0" x2=".6" y2="1"><stop offset="0" stop-color="#ff5544"/><stop offset=".45" stop-color="#c25ad0"/><stop offset=".85" stop-color="#6a62ff"/><stop offset="1" stop-color="#38c8ff"/></linearGradient>
 <linearGradient id="sgS" x1="0" y1="0" x2="1" y2="1"><stop offset="0" stop-color="#7b5cf0"/><stop offset="1" stop-color="#c07ae8"/></linearGradient></defs>
 <path d="M74 7.500l4-2.300c1.200 1.300 4.300 1.300 5.500 0l4 2.300-1.600 3.200-1.700-.8v7.200a.8.800 0 0 1-.8.800h-5.300a.8.800 0 0 1-.8-.8v-7.200l-1.700.8z" fill="url(#sgT)"/>
 <circle cx="89" cy="2.800" r="2.700" fill="#ff5530"/>
 <g fill="#0a66d8"><rect x="98.700" y="5.200" width="5.800" height="5.800" rx="1.500"/><circle cx="109.200" cy="8" r="2.700"/><rect x="98.700" y="12.300" width="5.800" height="5.800" rx="1.500"/><rect x="106.200" y="12.300" width="5.800" height="5.800" rx="1.500"/></g>
 <path d="M128.500 3l2.200 3.700h4.200l-2.100 3.800 2.100 3.800h-4.200l-2.200 3.700-2.200-3.700h-4.200l2.100-3.800-2.100-3.800h4.200z" fill="url(#sgS)" opacity=".92"/>
 <path d="M128.500 8.200a1.600 1.600 0 0 1 .6 3v6.300l-.6 1-.6-1v-6.300a1.600 1.600 0 0 1 .6-3z" fill="#fff"/>
</svg>
<!-- TASKBAR -->
<div class="abs" style="left:0;top:1039px;width:1920px;height:1px;background:#fbfafa"></div>
<div class="abs" style="left:0;top:1040px;width:1920px;height:8px;overflow:hidden;background:linear-gradient(90deg,#2873b2 0,#2f7fbe 60px,#4a93c8 100px,#2f80c0 140px,#3288c8 200px,#4da4da 370px,#5cb1e1 520px,#58aee0 700px,#459ad6 860px,#3388c8 1000px,#2d7ebf 1200px,#2e80c2 1290px,#4f9ad6 1318px,#3a86c6 1338px,#2a70b0 1350px,#23609d 1450px,#1f548d 1600px,#1c4a80 1750px,#1b467a 1920px)">
 <div class="abs" style="left:0;top:0;width:1920px;height:1px;background:rgba(10,40,80,.55)"></div>
 <div class="abs" style="left:0;top:1px;width:1920px;height:1px;background:rgba(255,255,255,.28)"></div>
 <div class="abs" style="left:13px;top:2px;width:28px;height:28px;border-radius:50%;border:1px solid #1d3d63;background:radial-gradient(circle at 50% 30%,#eef3f8 0,#b9cbdc 45%,#7f9cba 100%)"></div>
 <div class="abs" style="left:86px;top:4px;width:18px;height:15px;border-radius:50%;border:2.500px solid #f2c200;transform:rotate(-22deg)"></div>
 <div class="abs" style="left:151px;top:4.500px;width:0;height:0;border-left:4.500px solid transparent;border-right:4.500px solid transparent;border-bottom:5px solid #ffe326"></div>
 <div class="abs" style="left:183px;top:1px;width:59px;height:12px;border:1px solid #24507e;border-radius:3px 3px 0 0;background:linear-gradient(#e9f3fb,#cfe5f6);box-shadow:inset 0 0 0 1px rgba(255,255,255,.8)"></div>
 <div class="abs" style="left:246px;top:1px;width:59px;height:12px;border:1px solid #24507e;border-radius:3px 3px 0 0;background:linear-gradient(#e4f0fa,#c8e1f4);box-shadow:inset 0 0 0 1px rgba(255,255,255,.8)"></div>
 <div class="abs" style="left:308px;top:1px;width:59px;height:12px;border:1px solid #24507e;border-radius:3px 3px 0 0;background:linear-gradient(#c6e0f3,#a9d0ec);box-shadow:inset 0 0 0 1px rgba(255,255,255,.7)"></div>
 <div class="abs" style="left:201px;top:3px;width:24px;height:24px;border-radius:50%;background:#e8392c"></div>
 <div class="abs" style="left:259px;top:3.500px;width:32px;height:12px;border:1px solid #8c93c4;border-radius:1px;background:#2b2a63"></div>
 <div class="abs" style="left:324px;top:4px;width:28px;height:16px;border-radius:14px 14px 0 0/9px 9px 0 0;background:#fcfcfc"></div>
 <div class="abs" style="left:335.500px;top:6.500px;width:4px;height:3px;border-radius:2px 2px 0 0;background:#222"></div>
 <div class="abs" style="left:1906px;top:1px;width:14px;height:8px;border-left:1px solid #0e2a4c;background:linear-gradient(#8c9cb2,#5d7392);box-shadow:inset 1px 1px 0 rgba(255,255,255,.45)"></div>
 <div class="abs" style="left:1854px;top:6.500px;width:27px;height:2px;opacity:.85;background:repeating-linear-gradient(90deg,#fff 0,#fff 3px,transparent 3px,transparent 6px)"></div>
</div>
<!--TASKBAR-->
</body>
</html>
